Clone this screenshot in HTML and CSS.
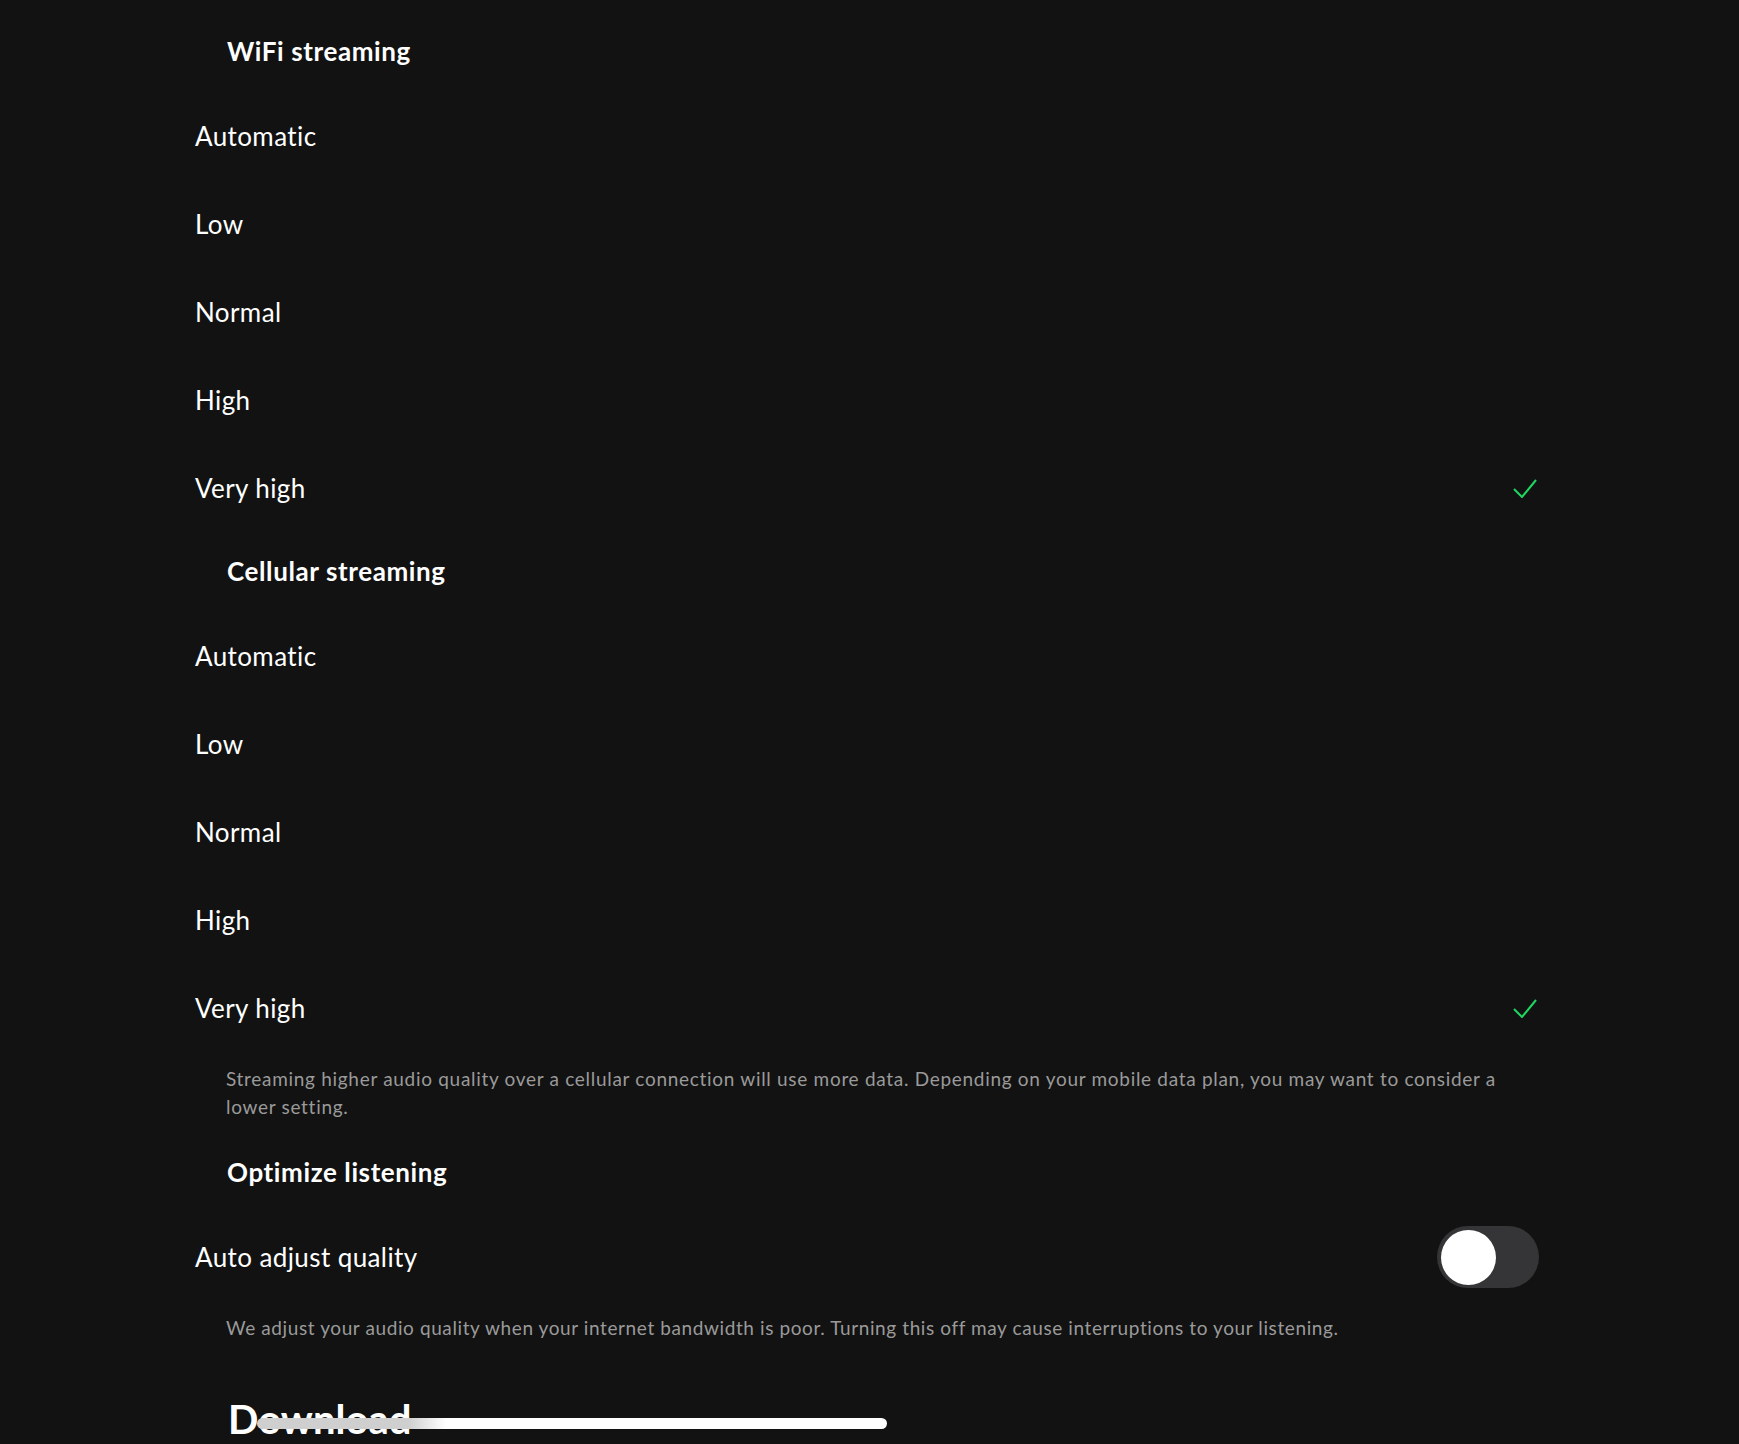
FILE: index.html
```html
<!DOCTYPE html>
<html lang="en">
<head>
    <meta charset="UTF-8">
    <meta name="viewport" content="width=device-width, initial-scale=1.0">
    <title>Audio quality</title>
    <link rel="stylesheet" href="styles.css">
</head>
<body>
    <main class="settings">
        <section class="group">
            <h2 class="group-title">WiFi streaming</h2>
            <ul class="options">
                <li class="option">Automatic</li>
                <li class="option">Low</li>
                <li class="option">Normal</li>
                <li class="option">High</li>
                <li class="option">Very high
                    <svg class="check" viewBox="0 0 24 19"><polyline points="1,10 9,18 23,1"/></svg>
                </li>
            </ul>
        </section>

        <section class="group">
            <h2 class="group-title">Cellular streaming</h2>
            <ul class="options">
                <li class="option">Automatic</li>
                <li class="option">Low</li>
                <li class="option">Normal</li>
                <li class="option">High</li>
                <li class="option">Very high
                    <svg class="check" viewBox="0 0 24 19"><polyline points="1,10 9,18 23,1"/></svg>
                </li>
            </ul>
            <p class="note">Streaming higher audio quality over a cellular connection will use more data. Depending on your mobile data plan, you may want to consider a lower setting.</p>
        </section>

        <section class="group">
            <h2 class="group-title">Optimize listening</h2>
            <ul class="options">
                <li class="option">Auto adjust quality
                    <span class="toggle"><span class="knob"></span></span>
                </li>
            </ul>
            <p class="note note-short">We adjust your audio quality when your internet bandwidth is poor. Turning this off may cause interruptions to your listening.</p>
        </section>

        <h1 class="section-title">Download</h1>
    </main>
    <div class="home-indicator"></div>
</body>
</html>
```
FILE: styles.css
```css
*{
    margin: 0;
    padding: 0;
    box-sizing: border-box;
}
html, body{
    height: 100%;
    overflow: hidden;
}
body{
    background-color: #121212;
    color: #fff;
    font-family: Lato, "Liberation Sans", sans-serif;
}
.settings{
    width: 1342px;
    margin-left: 195px;
    padding-top: 12px;
}
.group-title{
    height: 80px;
    line-height: 78px;
    padding-left: 32px;
    font-size: 26px;
    font-weight: 700;
    letter-spacing: 0.6px;
}
.options{
    list-style: none;
}
.option{
    height: 88px;
    display: flex;
    align-items: center;
    justify-content: space-between;
    font-size: 26px;
    letter-spacing: 0.4px;
}
.check{
    width: 24px;
    height: 19px;
    fill: none;
    stroke: #1ed760;
    stroke-width: 2;
}
.note{
    padding: 13px 0 12px 31px;
    font-size: 19px;
    line-height: 28px;
    letter-spacing: 0.7px;
    color: #9a9a9a;
}
.note-short{
    letter-spacing: 0.6px;
}
.toggle{
    width: 102px;
    height: 62px;
    border-radius: 31px;
    background-color: #353537;
    display: flex;
    align-items: center;
    padding: 0 4px;
    margin-right: -2px;
}
.knob{
    width: 55px;
    height: 55px;
    border-radius: 50%;
    background-color: #fff;
}
.section-title{
    margin: 41px 0 0 33px;
    font-size: 40px;
    line-height: 48px;
    font-weight: 700;
}
.home-indicator{
    position: absolute;
    left: 257px;
    top: 1418px;
    width: 630px;
    height: 11px;
    border-radius: 6px;
    background: linear-gradient(to right, #cfcfcf 0%, #cfcfcf 24%, #fff 30%, #fff 100%);
}
```
